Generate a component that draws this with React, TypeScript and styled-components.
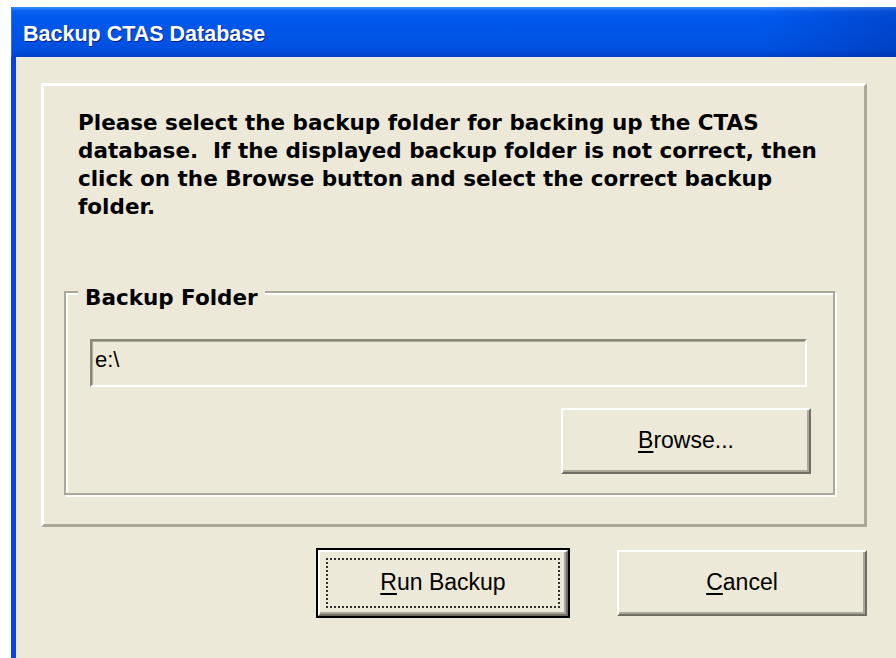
import React from "react";
import styled, { createGlobalStyle } from "styled-components";

const GlobalStyle = createGlobalStyle`
  html, body {
    margin: 0;
    padding: 0;
    background: #ffffff;
    overflow: hidden;
  }
  #root {
    height: 658px;
  }
`;

const Screen = styled.div`
  height: 658px;
  padding: 7px 0 0 11px;
  box-sizing: border-box;
`;

const Window = styled.div`
  display: flex;
  flex-direction: column;
  height: 100%;
`;

const TitleBar = styled.div`
  height: 50px;
  display: flex;
  align-items: center;
  padding-left: 11px;
  padding-top: 4px;
  box-sizing: border-box;
  background:
    linear-gradient(90deg, rgba(0, 0, 0, 0) 85%, rgba(0, 20, 120, 0.25) 100%),
    linear-gradient(
      180deg,
      #3a8cff 0%,
      #0a62f2 8%,
      #0058ee 20%,
      #0055e6 55%,
      #0050df 85%,
      #0040c8 100%
    );
  border-left: 1px solid #2a70ee;
`;

const Title = styled.span`
  font-family: "Liberation Sans", Arial, sans-serif;
  font-weight: bold;
  font-size: 21.5px;
  color: #ffffff;
  text-shadow: 1px 1px 0 #0a1e8c;
`;

const Frame = styled.div`
  flex: 1;
  display: flex;
  flex-direction: column;
  background: #ece9d8;
  border-left: 5px solid #0a44e0;
  padding: 26px 29px 0 25px;
`;

const Panel = styled.div`
  border: 3px solid;
  border-color: #ffffff #aca899 #aca899 #ffffff;
  padding: 23px 29px 29px 20px;
`;

const Message = styled.p`
  margin: 0;
  padding-left: 14px;
  font-family: "DejaVu Sans", Verdana, sans-serif;
  font-weight: bold;
  font-size: 21.5px;
  line-height: 28px;
  color: #000000;
  white-space: pre-wrap;
`;

const GroupBox = styled.div`
  position: relative;
  margin-top: 70px;
  border: 2px solid #aca899;
  box-shadow: 2px 2px 0 #ffffff, inset 2px 2px 0 #ffffff;
  padding: 46px 22px 19px 24px;
  display: flex;
  flex-direction: column;
`;

const GroupLabel = styled.span`
  position: absolute;
  top: -8px;
  left: 12px;
  padding: 0 7px;
  background: #ece9d8;
  font-family: "DejaVu Sans", Verdana, sans-serif;
  font-weight: bold;
  font-size: 21.5px;
  line-height: 26px;
  color: #000000;
`;

const PathField = styled.div`
  height: 48px;
  margin-right: 4px;
  box-sizing: border-box;
  border: 2px solid;
  border-color: #8a8878 #ffffff #ffffff #8a8878;
  box-shadow: inset 1px 1px 0 #aca899;
  background: #ece9d8;
  display: flex;
  align-items: center;
  padding: 0 0 6px 3px;
  font-family: "Liberation Sans", Arial, sans-serif;
  font-size: 22px;
  color: #000000;
`;

const Button = styled.button<{ $default?: boolean }>`
  width: 250px;
  height: 66px;
  box-sizing: border-box;
  background: #ece9d8;
  font-family: "Liberation Sans", Arial, sans-serif;
  font-size: 23px;
  color: #000000;
  cursor: pointer;
  padding: 0;
  display: flex;
  align-items: center;
  justify-content: center;
  border: 2px solid;
  border-color: #ffffff #716f64 #716f64 #ffffff;
  box-shadow: inset -2px -2px 0 #aca899;
  outline: ${(p) => (p.$default ? "2px solid #000000" : "none")};
  outline-offset: 0;

  u {
    text-decoration-thickness: 2px;
    text-underline-offset: 3px;
  }
`;

const FocusRing = styled.span`
  display: flex;
  align-items: center;
  justify-content: center;
  width: calc(100% - 12px);
  height: calc(100% - 12px);
  box-sizing: border-box;
  border: 2px dotted #303030;
  padding-bottom: 2px;
`;

const BrowseRow = styled.div`
  display: flex;
  justify-content: flex-end;
  margin-top: 21px;
`;

const ButtonRow = styled.div`
  display: flex;
  justify-content: flex-end;
  gap: 49px;
  margin-top: 23px;
`;

const Label = styled.span`
  padding-bottom: 2px;
`;

export default function App() {
  return (
    <>
      <GlobalStyle />
      <Screen>
        <Window>
          <TitleBar>
            <Title>Backup CTAS Database</Title>
          </TitleBar>
          <Frame>
            <Panel>
              <Message>
                {"Please select the backup folder for backing up the CTAS\n" +
                  "database.  If the displayed backup folder is not correct, then\n" +
                  "click on the Browse button and select the correct backup\n" +
                  "folder."}
              </Message>
              <GroupBox>
                <GroupLabel>Backup Folder</GroupLabel>
                <PathField>e:\</PathField>
                <BrowseRow>
                  <Button>
                    <Label>
                      <u>B</u>rowse...
                    </Label>
                  </Button>
                </BrowseRow>
              </GroupBox>
            </Panel>
            <ButtonRow>
              <Button $default>
                <FocusRing>
                  <u>R</u>un Backup
                </FocusRing>
              </Button>
              <Button>
                <Label>
                  <u>C</u>ancel
                </Label>
              </Button>
            </ButtonRow>
          </Frame>
        </Window>
      </Screen>
    </>
  );
}
